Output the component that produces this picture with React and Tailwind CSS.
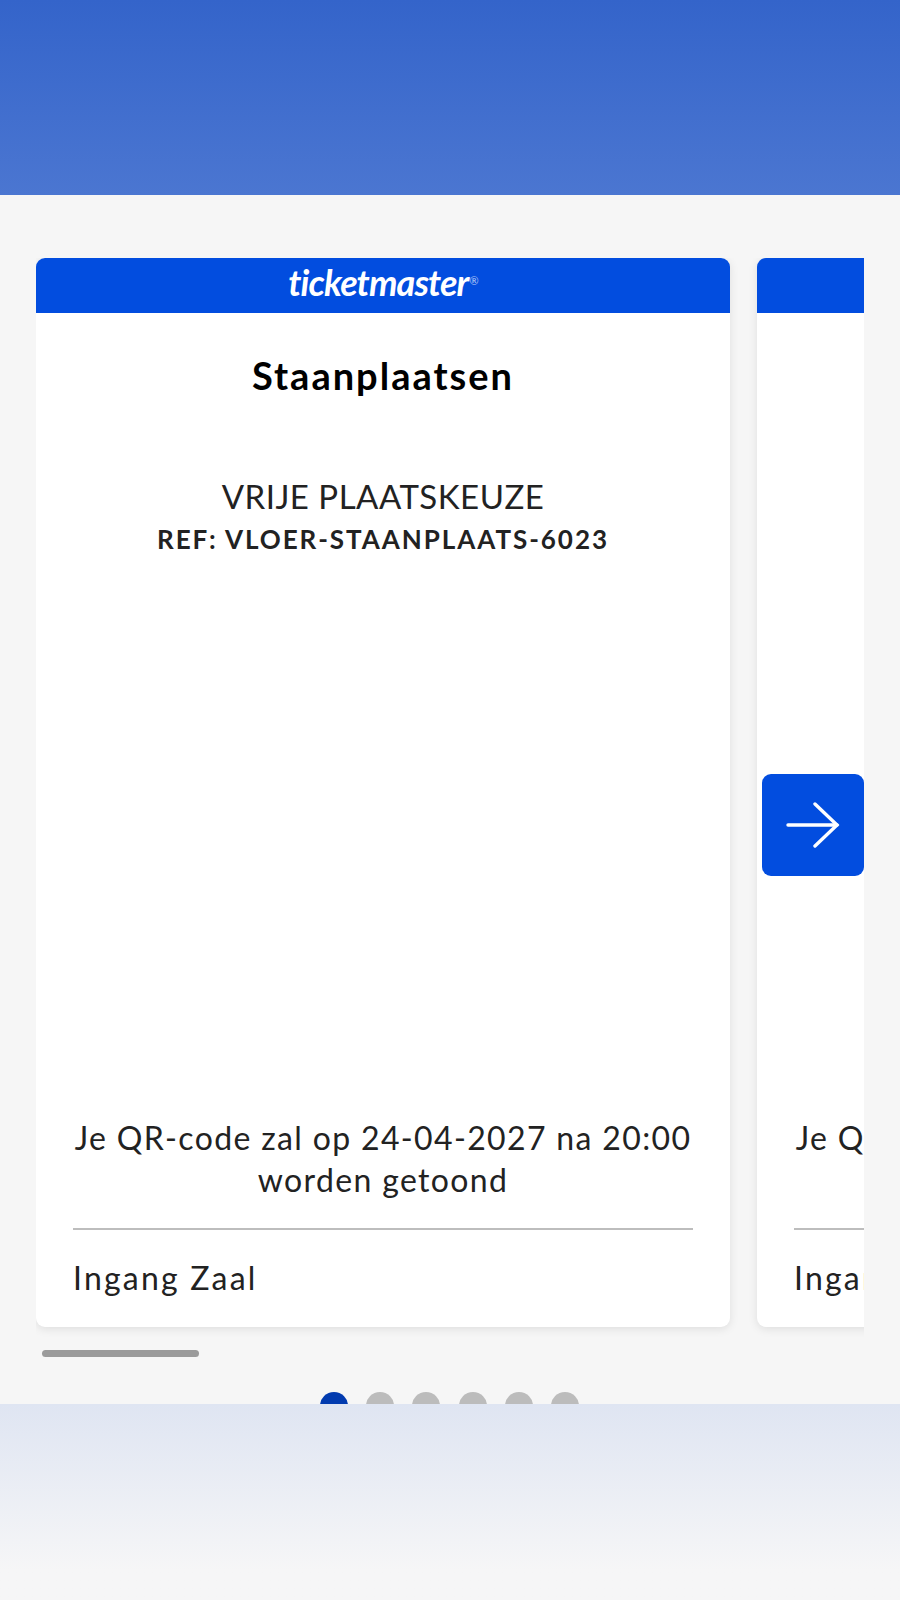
function Card({ children }) {
  return (
    <div className="w-[694px] shrink-0 h-[1069px] bg-white rounded-[9px] shadow-[0_2px_10px_rgba(0,0,0,0.1)] overflow-hidden flex flex-col">
      <div className="h-[55px] shrink-0 bg-[#024ddf] flex items-center justify-center">
        {children}
      </div>
      <div className="flex-1 flex flex-col">
        <h2 className="mt-[40px] text-center text-[38px] leading-[44px] font-bold text-black tracking-[2px]">Staanplaatsen</h2>
        <p className="mt-[79px] text-center text-[33px] leading-[40px] text-[#222] tracking-[0.5px]">VRIJE PLAATSKEUZE</p>
        <p className="mt-[7px] text-center text-[26px] leading-[32px] font-bold text-[#222] tracking-[1.95px]">REF: VLOER-STAANPLAATS-6023</p>
        <div className="flex-1" />
        <p className="px-[36px] text-center text-[32px] leading-[42px] text-[#222] tracking-[1.35px]">
          Je QR-code zal op 24-04-2027 na 20:00 worden getoond
        </p>
        <div className="mt-[27px] mx-[37px] h-[2px] bg-[#bdbdbd]" />
        <p className="mt-[28px] mb-[29px] px-[37px] text-[32px] leading-[40px] text-[#222] tracking-[2.2px]">Ingang Zaal</p>
      </div>
    </div>
  );
}

export default function App() {
  const dots = [0, 1, 2, 3, 4, 5];

  return (
    <div className="w-[900px] h-[1600px] overflow-hidden bg-[#f6f6f6] font-['Lato',sans-serif]">
      <div className="h-[195px] bg-gradient-to-b from-[#3464ca] to-[#4b76d1]" />

      <div className="h-[1209px] overflow-hidden pt-[63px] pl-[36px]">
        <div className="relative w-[828px] flex gap-[27px] overflow-hidden pb-[12px]">
          <Card>
            <span className="-mt-[8px] italic font-bold text-[36px] leading-none text-white tracking-[-0.9px]">
              ticketmaster<sup className="text-[11px] font-normal not-italic text-white/70 ml-[1px] -top-[11px]">®</sup>
            </span>
          </Card>
          <Card />
          <button className="absolute top-[516px] right-0 w-[102px] h-[102px] rounded-[9px] bg-[#024ddf] flex items-center justify-center">
            <svg width="54" height="46" viewBox="0 0 54 46" fill="none" stroke="white" strokeWidth="3.4" strokeLinecap="round" strokeLinejoin="miter">
              <path d="M2 23H51" />
              <path d="M29 2L51 23L29 44" />
            </svg>
          </button>
        </div>

        <div className="mt-[11px] ml-[6px] w-[157px] h-[7px] rounded-full bg-[#9b9b9b]" />

        <div className="mt-[35px] ml-[284px] flex gap-[18.2px]">
          {dots.map((d) => (
            <div key={d} className={`w-[28px] h-[28px] rounded-full ${d === 0 ? "bg-[#023baf]" : "bg-[#bcbcbc]"}`} />
          ))}
        </div>
      </div>

      <div className="h-[196px] bg-gradient-to-b from-[#dfe5f2] to-[#f6f6f7] to-85%" />
    </div>
  );
}
